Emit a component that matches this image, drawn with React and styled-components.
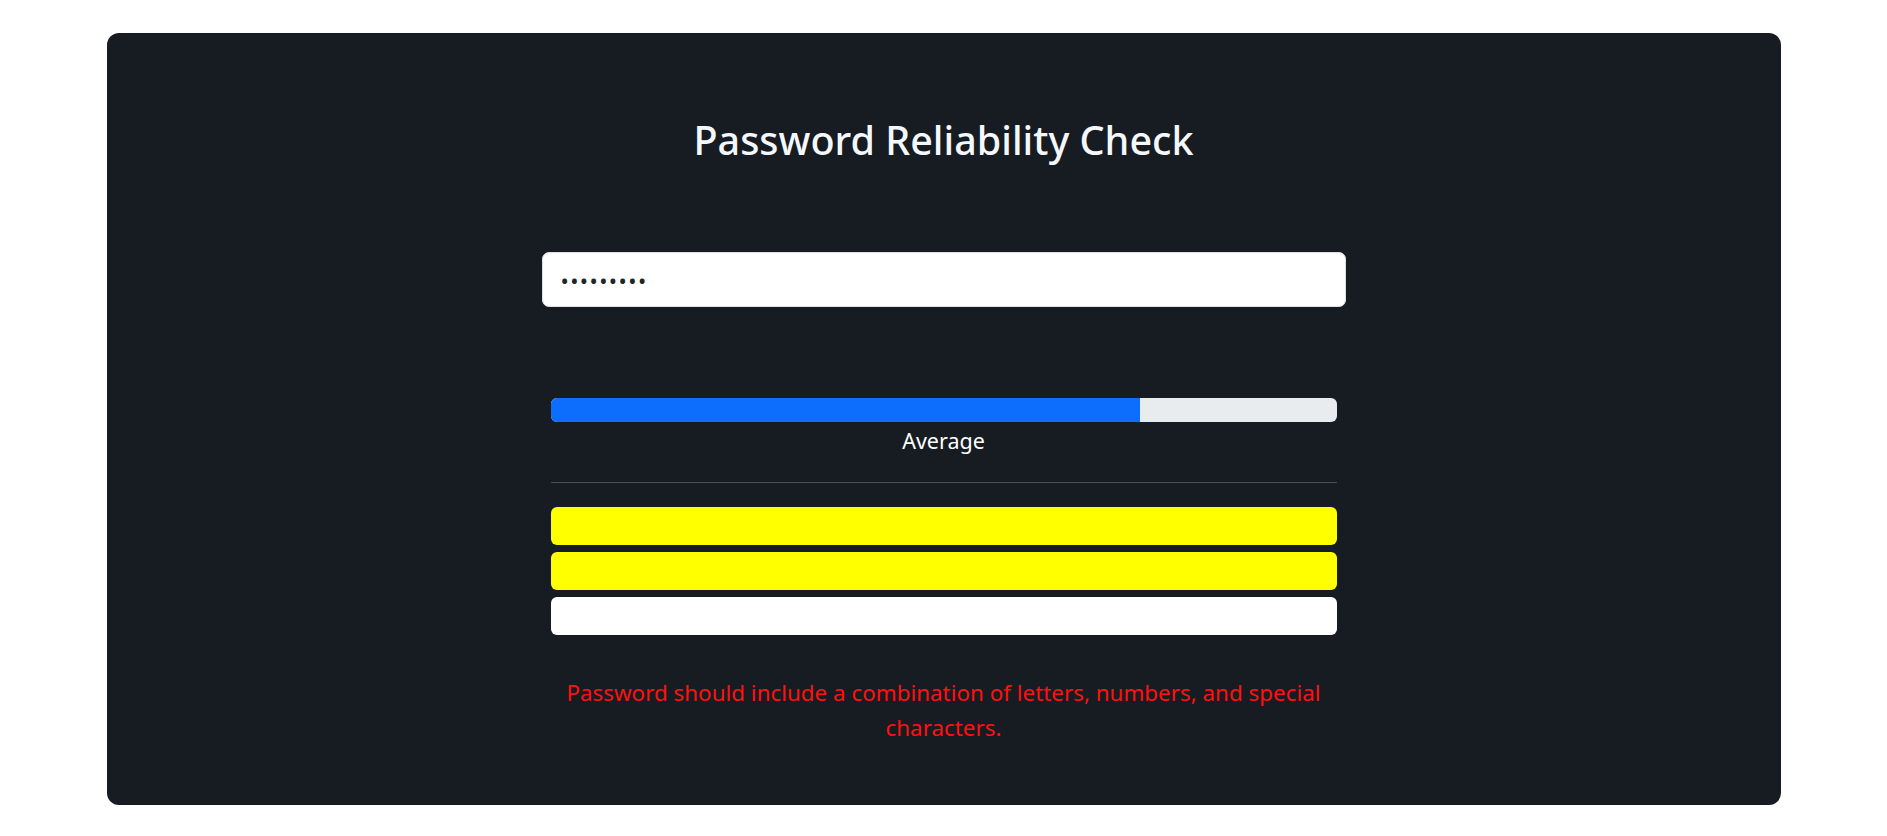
import * as React from 'react';
import styled, { createGlobalStyle } from 'styled-components';

const GlobalStyle = createGlobalStyle`
  body {
    margin: 0;
    background: #ffffff;
    font-family: "Noto Sans", "Open Sans", sans-serif;
  }
`;

const Card = styled.div`
  width: 1674px;
  height: 772px;
  margin: 33px auto 0;
  box-sizing: border-box;
  background: #171b22;
  border-radius: 12px;
  display: flex;
  flex-direction: column;
  align-items: center;
  padding-top: 83px;
`;

const Title = styled.h1`
  margin: 0;
  font-size: 39.5px;
  line-height: 48px;
  font-weight: 500;
  color: #f4f8fc;
`;

const PasswordInput = styled.input`
  margin-top: 88px;
  width: 804px;
  height: 55px;
  box-sizing: border-box;
  padding: 0 18px;
  border: 1px solid #dee2e6;
  border-radius: 7px;
  background: #ffffff;
  color: #212529;
  font-family: "Noto Sans", sans-serif;
  font-size: 22px;
  letter-spacing: 1.4px;
  outline: none;
`;

const Meter = styled.div`
  width: 786px;
  margin-top: 91px;
  display: flex;
  flex-direction: column;
  align-items: stretch;
`;

const Track = styled.div`
  height: 24px;
  background: #e9ecef;
  border-radius: 6px;
  overflow: hidden;
  display: flex;
`;

const Fill = styled.div`
  height: 100%;
  background: #0d6efd;
`;

const Label = styled.div`
  margin-top: 2px;
  text-align: center;
  color: #ffffff;
  font-size: 21.5px;
  line-height: 33px;
`;

const Divider = styled.hr`
  margin: 25px 0 0;
  border: 0;
  border-top: 1px solid #4b5058;
`;

const Checks = styled.div`
  margin-top: 24px;
  display: flex;
  flex-direction: column;
  gap: 7px;
`;

const CheckBar = styled.div`
  height: 38px;
  border-radius: 6px;
  background: ${p => (p.$passed ? '#ffff00' : '#ffffff')};
`;

const Hint = styled.p`
  margin: 40px 0 0;
  text-align: center;
  color: #ff1010;
  font-size: 22.4px;
  line-height: 35px;
`;

const checks = [true, true, false];

const App = () => {
  const strength = 75;
  return (
    <>
      <GlobalStyle />
      <Card>
        <Title>Password Reliability Check</Title>
        <PasswordInput type="password" value="123456789" readOnly />
        <Meter>
          <Track>
            <Fill style={{ width: `${strength}%` }} />
          </Track>
          <Label>Average</Label>
          <Divider />
          <Checks>
            {checks.map((c, i) => (
              <CheckBar key={i} $passed={c} />
            ))}
          </Checks>
          <Hint>Password should include a combination of letters, numbers, and special characters.</Hint>
        </Meter>
      </Card>
    </>
  );
};

export default App;
